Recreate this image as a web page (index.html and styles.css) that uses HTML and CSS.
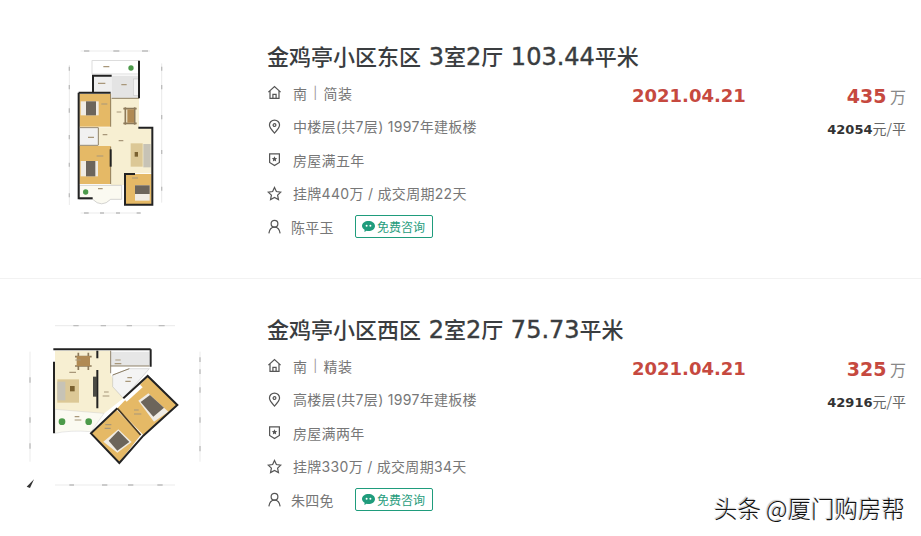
FILE: index.html
```html
<!DOCTYPE html>
<html>

<head>
    <title>成交记录</title>
    <link rel="stylesheet" href="styles.css">
</head>

<body>
    <svg class="icon-defs" width="0" height="0">
        <symbol id="i-home" viewBox="0 0 16 16">
            <path d="M1.500 7.600 8 1.700l6.500 5.900M3.200 6.400v7.900h9.600V6.400M6.300 14.300v-4.200h3.400v4.200" />
        </symbol>
        <symbol id="i-pin" viewBox="0 0 16 16">
            <path d="M8 15C5 11.800 2.600 9.400 2.600 6.500a5.400 5.400 0 0 1 10.800 0C13.400 9.400 11 11.800 8 15Z" />
            <circle cx="8" cy="6.500" r="1.500" />
        </symbol>
        <symbol id="i-shield" viewBox="0 0 16 16">
            <path d="M2.800 2h10.400v9.200L8 14.400l-5.200-3.200Z" />
            <path class="solid" d="m8 4.600.9 1.900 2 .2-1.500 1.400.4 2L8 9.100l-1.800 1 .4-2-1.500-1.400 2-.2Z" />
        </symbol>
        <symbol id="i-star" viewBox="0 0 16 16">
            <path d="m8 1.600 2 4.300 4.700.6-3.400 3.200.9 4.700L8 12.100l-4.200 2.300.9-4.700-3.400-3.200L6 5.900Z" />
        </symbol>
        <symbol id="i-user" viewBox="0 0 16 16">
            <circle cx="8" cy="5" r="3.600" />
            <path d="M2 15.400c.5-4 2.800-6.800 6-6.800s5.500 2.800 6 6.800" />
        </symbol>
        <symbol id="i-chat" viewBox="0 0 13 11">
            <path class="chat-fill" d="M6.500 0C10 0 13 2 13 5s-3 5-6.500 5c-.7 0-1.300-.1-1.900-.2L2.400 11l.2-2.300C1 7.800 0 6.500 0 5 0 2 3 0 6.500 0Z" />
            <circle class="chat-dot" cx="4.600" cy="4.700" r="1" />
            <circle class="chat-dot" cx="8.400" cy="4.700" r="1" />
        </symbol>
    </svg>

    <div class="list">
        <div class="listing">
            <div class="plan">
                <svg class="plan-svg" viewBox="0 0 600 600">
                    <path class="dim" d="M182 63H390M182 549H362M148 105V525M425 100V518" />
                    <path class="dim-label" d="M192 63H208M280 63H298M366 63H384M192 549H206M240 549H252M288 549H300M350 549H362M148 110V122M148 165V178M148 235V248M148 315V328M148 398V410M148 490V502M425 110V122M425 165V178M425 255V268M425 360V372M425 470V482" />
                    <rect x="216" y="92" width="141" height="40" fill="#fff" stroke="#ccc" stroke-width="2" />
                    <circle cx="333" cy="114" r="8" fill="#4c9a4a" />
                    <rect x="219" y="137" width="56" height="53" fill="#efefef" />
                    <rect x="275" y="137" width="82" height="68" fill="#e4e4e4" />
                    <rect x="340" y="147" width="15" height="50" fill="#f4f4f4" stroke="#aaa" />
                    <path d="M272 205H357V295H395V430H312V465H272V350H235V292H272Z" fill="#f7efd2" />
                    <rect x="178" y="192" width="94" height="98" fill="#e5b966" />
                    <rect x="178" y="295" width="57" height="50" fill="#f1f1f1" />
                    <rect x="178" y="348" width="94" height="114" fill="#e5b966" />
                    <rect x="315" y="432" width="80" height="90" fill="#e5b966" />
                    <path d="M178 466H305V508H272Q245 535 218 508H178Z" fill="#fbfaf1" stroke="#aaa" stroke-width="1.500" />
                    <circle cx="197" cy="486" r="8" fill="#4c9a4a" />
                    <rect x="182" y="214" width="54" height="42" fill="#f0ece4" />
                    <rect x="198" y="214" width="30" height="42" fill="#6c655b" />
                    <rect x="182" y="393" width="52" height="46" fill="#f0ece4" />
                    <rect x="198" y="393" width="28" height="46" fill="#6c655b" />
                    <rect x="345" y="466" width="44" height="46" fill="#f0ece4" />
                    <rect x="345" y="466" width="44" height="26" fill="#6c655b" />
                    <rect x="332" y="340" width="36" height="70" fill="#dcc896" />
                    <rect x="344" y="366" width="10" height="14" fill="#7a6130" />
                    <rect x="370" y="342" width="22" height="70" fill="#c7c3b6" />
                    <path d="M310 236H350M310 280H350M316 232V284M344 232V284" stroke="#8d7a5a" stroke-width="5" />
                    <rect x="322" y="238" width="20" height="40" fill="#b08a54" />
                    <path class="label" d="M250 110H268M234 160H256M304 164H320M244 222H262M290 246H304M248 314H262M204 322H222M296 332H310M230 378H250M336 444H354M234 476H248" />
                    <g class="walls">
                        <path d="M176 188H272M176 188V505H218M219 188V137H275M357 92V205M355 293H397V524H315V432H345" />
                        <path class="wall-thin" d="M272 190V290M272 350V462M275 205H357M178 293H235M178 346H235M235 293V345" />
                        <path d="M272 358V410" stroke-width="5" />
                    </g>
                </svg>
            </div>
            <div class="info">
                <h2 class="title">金鸡亭小区东区<span class="num"> 3</span>室<span class="num">2</span>厅<span class="num"> 103.44</span>平米</h2>
                <div class="meta meta-first"><svg class="icon"><use href="#i-home" /></svg>南<span class="sep">|</span>简装</div>
                <div class="meta"><svg class="icon"><use href="#i-pin" /></svg>中楼层(共7层) 1997年建板楼</div>
                <div class="meta"><svg class="icon"><use href="#i-shield" /></svg>房屋满五年</div>
                <div class="meta"><svg class="icon"><use href="#i-star" /></svg>挂牌440万 / 成交周期22天</div>
                <div class="meta agent"><svg class="icon"><use href="#i-user" /></svg><span>陈平玉</span><span class="consult"><svg class="chat"><use href="#i-chat" /></svg>免费咨询</span></div>
            </div>
            <div class="date">2021.04.21</div>
            <div class="price">
                <div class="total"><b>435</b> 万</div>
                <div class="unit"><b>42054</b>元/平</div>
            </div>
        </div>

        <div class="listing">
            <div class="plan">
                <svg class="plan-svg plan-wide" viewBox="0 0 630 600">
                    <path class="dim" d="M135 47H495M135 525H495M60 125V455M570 125V455" />
                    <path class="dim-label" d="M190 47H206M272 47H288M350 47H366M446 47H464M178 525H192M276 525H292M354 525H370M442 525H458M60 202V218M60 322V338M60 400V416M570 142V156M570 178V192M570 232V248M570 322V338M570 408V424" />
                    <path d="M135 122H300V190L340 265 270 320 135 298Z" fill="#f7efd2" />
                    <path d="M302 125H418V168H302Z" fill="#e6e6e6" />
                    <path d="M308 195 358 176H418L340 265 308 230Z" fill="#f4f4f4" stroke="#999" />
                    <path d="M135 298 282 310 243 365Q180 360 135 370Z" fill="#fbfaf1" stroke="#bbb" />
                    <circle cx="156" cy="335" r="10" fill="#4c9a4a" />
                    <circle cx="236" cy="335" r="10" fill="#4c9a4a" />
                    <path d="M413 200 500 285 400 375 322 295Z" fill="#e5b966" />
                    <path d="M320 300 392 375 328 457 245 370Z" fill="#e5b966" />
                    <path d="M340 265 388 222 398 232 350 275Z" fill="#fff" />
                    <path d="M415 250 475 305 432 335 385 272Z" fill="#f0ece4" />
                    <path d="M420 255 462 293 430 320 392 276Z" fill="#6c655b" />
                    <path d="M325 358 365 396 322 428 280 395Z" fill="#f0ece4" />
                    <path d="M325 362 358 396 322 422 296 392Z" fill="#6c655b" />
                    <rect x="142" y="208" width="65" height="70" fill="#dcc896" />
                    <rect x="142" y="215" width="24" height="56" fill="#c7c3b6" />
                    <rect x="180" y="228" width="14" height="16" fill="#7a6130" />
                    <path d="M195 140H245M195 168H245M205 128V180M235 128V180" stroke="#8d7a5a" stroke-width="5" />
                    <rect x="200" y="138" width="40" height="30" fill="#b08a54" />
                    <rect x="249" y="200" width="11" height="60" fill="#4a4a44" />
                    <path class="label" d="M196 150H212M178 187H198M316 150H332M314 161H334M352 203H366M346 214H362M282 246H296M278 258H298M194 320H208M194 330H214M372 300H386M372 312H394M286 344H304M284 355H302" />
                    <g class="walls">
                        <path d="M130 118H422M132 155V370M262 122V145M262 180V295M422 118V170" />
                        <path class="wall-thin" d="M302 122V190M302 168H418M358 176 308 195" />
                        <path d="M340 265 413 198 502 285 400 377 328 459 243 370 322 295" />
                        <path class="wall-brown" d="M322 295 392 375" />
                    </g>
                    <path d="M50 530 72 508 60 534Z" fill="#333" />
                </svg>
            </div>
            <div class="info">
                <h2 class="title">金鸡亭小区西区<span class="num"> 2</span>室<span class="num">2</span>厅<span class="num"> 75.73</span>平米</h2>
                <div class="meta meta-first"><svg class="icon"><use href="#i-home" /></svg>南<span class="sep">|</span>精装</div>
                <div class="meta"><svg class="icon"><use href="#i-pin" /></svg>高楼层(共7层) 1997年建板楼</div>
                <div class="meta"><svg class="icon"><use href="#i-shield" /></svg>房屋满两年</div>
                <div class="meta"><svg class="icon"><use href="#i-star" /></svg>挂牌330万 / 成交周期34天</div>
                <div class="meta agent"><svg class="icon"><use href="#i-user" /></svg><span>朱四免</span><span class="consult"><svg class="chat"><use href="#i-chat" /></svg>免费咨询</span></div>
            </div>
            <div class="date">2021.04.21</div>
            <div class="price">
                <div class="total"><b>325</b> 万</div>
                <div class="unit"><b>42916</b>元/平</div>
            </div>
        </div>
    </div>

    <div class="watermark">头条 @厦门购房帮</div>
</body>

</html>
```

FILE: styles.css
```css
* {
    margin: 0;
    padding: 0;
    box-sizing: border-box;
}

body {
    font-family: "Noto Sans CJK SC", "Noto Sans", sans-serif;
    background: white;
    color: #333;
    height: 536px;
    overflow: hidden;
    position: relative;
}

.icon-defs {
    position: absolute;
}

.listing {
    display: flex;
    height: 279px;
    padding: 41px 15px 0 0;
    border-bottom: 1px solid #f2f2f2;
}

.listing + .listing {
    height: auto;
    padding-top: 35px;
    border-bottom: none;
}

.plan {
    width: 267px;
    flex-shrink: 0;
    margin-top: -11px;
}

.plan-svg {
    display: block;
    width: 200px;
    height: 200px;
    margin-left: 20px;
    filter: blur(0.4px);
}

.plan-wide {
    width: 210px;
    margin-left: 10px;
    margin-top: 7px;
}

.dim {
    fill: none;
    stroke: #d4d4d4;
    stroke-width: 1.500;
}

.dim-label {
    fill: none;
    stroke: #bdbdbd;
    stroke-width: 4;
}

.label {
    fill: none;
    stroke: #a8977a;
    stroke-width: 3.500;
}

.walls path {
    fill: none;
    stroke: #222;
    stroke-width: 6;
}

.walls .wall-thin {
    stroke: #7b6a4c;
    stroke-width: 2.500;
}

.walls .wall-brown {
    stroke: #4a3a20;
    stroke-width: 5;
}

.info {
    width: 365px;
    flex-shrink: 0;
}

.title {
    font-size: 22px;
    font-weight: 500;
    line-height: 28px;
    color: #3a3d40;
    white-space: pre;
}

.num {
    font-family: "DejaVu Sans", sans-serif;
    font-size: 24px;
    font-weight: 400;
    -webkit-text-stroke: 0.4px #3a3d40;
}

.meta {
    display: flex;
    align-items: center;
    height: 33.500px;
    font-family: Inter, "Noto Sans CJK SC", sans-serif;
    font-size: 14px;
    letter-spacing: 0.3px;
    color: #777;
    white-space: pre;
}

.meta-first {
    margin-top: 5px;
}

.sep {
    margin: 0 6px;
    font-size: 12px;
    color: #999;
}

.icon {
    width: 15px;
    height: 15px;
    margin-right: 11px;
    flex-shrink: 0;
    fill: none;
    stroke: #555;
    stroke-width: 1.300;
}

.solid {
    fill: #555;
    stroke: none;
}

.agent .icon {
    margin-right: 9px;
}

.consult {
    display: inline-flex;
    align-items: center;
    gap: 2px;
    height: 23px;
    margin-left: 21px;
    padding: 0 7px 0 6px;
    border: 1px solid #1f9c7c;
    border-radius: 2px;
    font-size: 12px;
    letter-spacing: 0;
    color: #1f9c7c;
}

.chat {
    width: 13px;
    height: 11px;
}

.chat-fill {
    fill: #1f9c7c;
}

.chat-dot {
    fill: #fff;
}

.date {
    width: 114px;
    margin-top: 43px;
    height: 24px;
    font-family: "DejaVu Sans", sans-serif;
    font-size: 18px;
    font-weight: 700;
    line-height: 24px;
    color: #c6493f;
    white-space: nowrap;
}

.price {
    flex: 1;
    margin-top: 43px;
    text-align: right;
}

.total {
    height: 24px;
    font-size: 16px;
    line-height: 24px;
    color: #888;
}

.total b {
    font-family: "DejaVu Sans", sans-serif;
    font-size: 19px;
    color: #c6493f;
}

.unit {
    margin-top: 10px;
    font-size: 14px;
    line-height: 20px;
    color: #666;
    white-space: nowrap;
}

.unit b {
    font-family: "DejaVu Sans", sans-serif;
    font-size: 13px;
    color: #333;
}

.watermark {
    position: absolute;
    right: 16px;
    top: 494px;
    font-size: 23.500px;
    font-weight: 300;
    line-height: 28px;
    color: #111;
    text-shadow: 1px 1px 1px #fff, -1px -1px 1px #bbb;
}
```
